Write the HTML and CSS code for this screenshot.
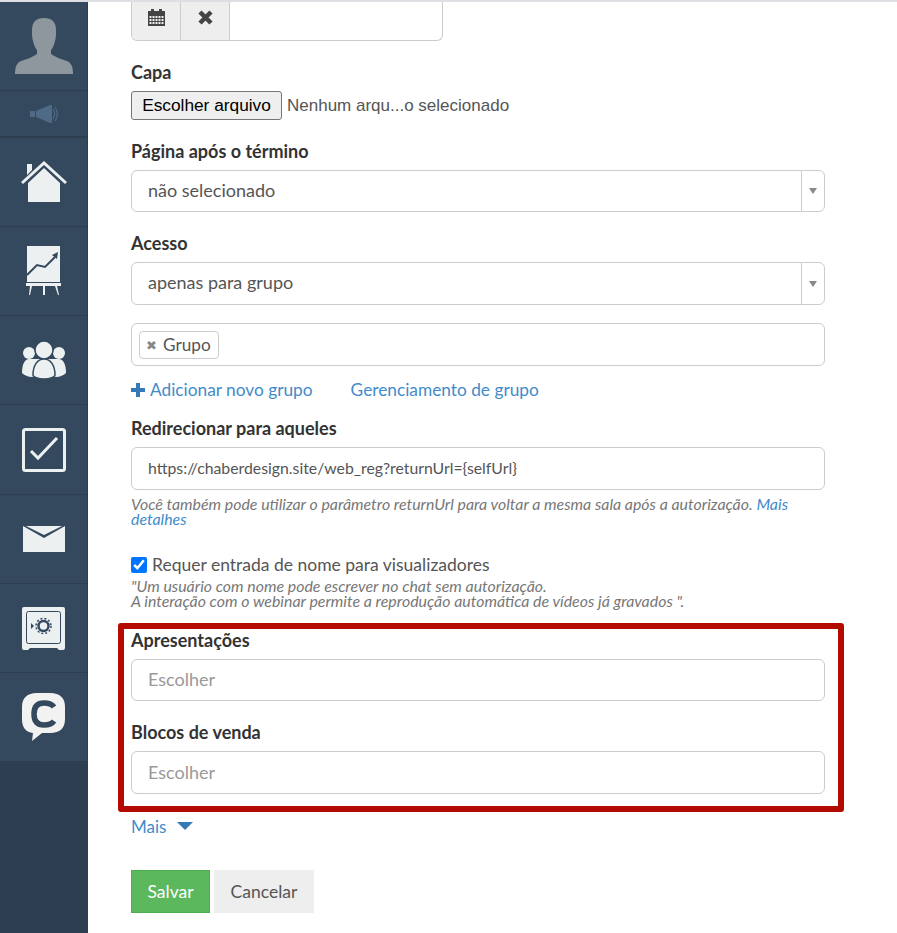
FILE: index.html
```html
<!DOCTYPE html>
<html lang="pt">
<head>
    <meta charset="UTF-8">
    <meta name="viewport" content="width=device-width, initial-scale=1.0">
    <title>Webinar</title>
    <link rel="stylesheet" href="styles.css">
</head>
<body>
    <div class="top-line"></div>
    <div class="layout">
        <nav class="sidebar">
            <div class="nav-list">
                <a class="nav-item">
                    <svg width="58" height="56" viewBox="0 0 58 56"><path fill="#8e969e" d="M29 0c8 0 12 4 12 12 0 4 0 8-1 11-1 4-2 7-4 9v4c4 3 10 5 16 7 4 2 6 5 6 13H0c0-8 2-11 6-13 6-2 12-4 16-7v-4c-2-2-3-5-4-9-1-3-1-7-1-11C17 4 21 0 29 0z"/></svg>
                </a>
                <a class="nav-item nav-sound">
                    <svg width="28" height="18" viewBox="0 0 28 18"><path fill="#4f6a87" d="M0 6h5v6H0zM6 6l14-6h2v18h-2L6 12z"/><path fill="none" stroke="#4f6a87" stroke-width="1.2" d="M23 4c2 3 2 7 0 10M25 2c3 4 3 10 0 14"/></svg>
                </a>
                <a class="nav-item">
                    <svg width="46" height="42" viewBox="0 0 46 42"><path fill="#ecf0f1" d="M6 3h5v6l-5 5zM7 22 23 7l16 15v19H7z"/><path fill="none" stroke="#ecf0f1" stroke-width="3" d="M1 22 23 2l22 20"/></svg>
                </a>
                <a class="nav-item">
                    <svg width="36" height="50" viewBox="0 0 36 50"><path fill="#ecf0f1" d="M1 0h33v36H1zM0 37h35v3H0zM4 40h2l-2 9H3zM17 40h2v9h-2zM29 40h2l2 9h-1z"/><path fill="none" stroke="#34495e" stroke-width="2" d="M1 29l10-10 8 2 10-10"/><path fill="#34495e" d="M26 9l6-3-1 7z"/></svg>
                </a>
                <a class="nav-item">
                    <svg width="44" height="38" viewBox="0 0 44 38"><g fill="#ecf0f1"><circle cx="7" cy="12" r="6"/><circle cx="37" cy="12" r="6"/><path d="M0 32c0-9 3-14 7-14h30c4 0 7 5 7 14-2 2-6 4-10 4H10c-4 0-8-2-10-4z"/><g stroke="#34495e" stroke-width="1.500"><circle cx="22" cy="9" r="9"/><path d="M22 18c7 0 11 7 11 16 0 2-5 4-11 4s-11-2-11-4c0-9 4-16 11-16z"/></g></g></svg>
                </a>
                <a class="nav-item nav-tall">
                    <svg width="44" height="44" viewBox="0 0 44 44"><rect x="1.500" y="1.500" width="41" height="41" rx="2" fill="none" stroke="#ecf0f1" stroke-width="3"/><path fill="none" stroke="#ecf0f1" stroke-width="3" d="M9 23l7 7 19-20"/></svg>
                </a>
                <a class="nav-item">
                    <svg width="42" height="26" viewBox="0 0 42 26"><path fill="#ecf0f1" d="M0 0l21 12L42 0v26H0zM3 0h36L21 9z"/></svg>
                </a>
                <a class="nav-item">
                    <svg width="43" height="43" viewBox="0 0 43 43"><path fill="#ecf0f1" d="M2 0h39q2 0 2 2v39q0 2-2 2h-4l-2-2H8l-2 2H2q-2 0-2-2V2q0-2 2-2z"/><rect x="4.500" y="4.500" width="34" height="32" rx="2" fill="none" stroke="#34495e" stroke-width="1"/><circle cx="21.500" cy="19" r="5" fill="none" stroke="#34495e" stroke-width="2.500"/><circle cx="21.500" cy="19" r="7.500" fill="none" stroke="#34495e" stroke-width="1.500" stroke-dasharray="2 2"/><path fill="#34495e" d="M9 16l3 3-3 3z"/></svg>
                </a>
                <a class="nav-item">
                    <svg width="43" height="48" viewBox="0 0 43 48"><path fill="#f2f2f2" d="M15 0h13c10 0 15 5 15 14v12c0 9-5 14-15 14h-8l-10 8 1-8C4 39 0 35 0 26V14C0 5 5 0 15 0z"/><path fill="none" stroke="#34495e" stroke-width="5.500" d="M32 14c-2-3-6-4-10-4-7 0-10 4-10 11s3 11 10 11c4 0 8-1 10-4"/></svg>
                </a>
            </div>
        </nav>

        <main class="content">
            <div class="date-group">
                <button class="addon"><svg width="17" height="17" viewBox="0 0 17 17"><path fill="#444" d="M0 2h3V0h3v2h5V0h3v2h3v15H0z"/><path fill="#eee" d="M1.500 7h2v2h-2zM4.500 7h2v2h-2zM7.500 7h2v2h-2zM10.500 7h2v2h-2zM13.500 7h2v2h-2zM1.500 10h2v2h-2zM4.500 10h2v2h-2zM7.500 10h2v2h-2zM10.500 10h2v2h-2zM13.500 10h2v2h-2zM1.500 13h2v2h-2zM4.500 13h2v2h-2zM7.500 13h2v2h-2zM10.500 13h2v2h-2zM13.500 13h2v2h-2z"/></svg></button>
                <button class="addon"><svg width="15" height="15" viewBox="0 0 15 15"><path fill="none" stroke="#444" stroke-width="4.500" d="M2 2l11 11M13 2 2 13"/></svg></button>
                <div class="date-input"></div>
            </div>

            <div class="form-group cover-group">
                <label>Capa</label>
                <div class="file-row">
                    <button class="file-button">Escolher arquivo</button>
                    <span class="file-name">Nenhum arqu...o selecionado</span>
                </div>
            </div>

            <div class="form-group">
                <label>Página após o término</label>
                <div class="field select">
                    <span>não selecionado</span>
                    <div class="select-arrow"><i></i></div>
                </div>
            </div>

            <div class="form-group access-group">
                <label>Acesso</label>
                <div class="field field-tall select">
                    <span>apenas para grupo</span>
                    <div class="select-arrow"><i></i></div>
                </div>
            </div>

            <div class="field field-tall tags">
                <div class="tag"><span class="tag-x">✖</span>Grupo</div>
            </div>

            <div class="group-links">
                <a href="#"><span class="plus"></span>Adicionar novo grupo</a>
                <a href="#">Gerenciamento de grupo</a>
            </div>

            <div class="form-group redirect-group">
                <label>Redirecionar para aqueles</label>
                <div class="field field-tall url-field">https://chaberdesign.site/web_reg?returnUrl={selfUrl}</div>
                <p class="help">Você também pode utilizar o parâmetro returnUrl para voltar a mesma sala após a autorização. <a href="#">Mais detalhes</a></p>
            </div>

            <div class="check-row">
                <input type="checkbox" checked>
                <span>Requer entrada de nome para visualizadores</span>
            </div>
            <p class="help check-help">"Um usuário com nome pode escrever no chat sem autorização.<br>A interação com o webinar permite a reprodução automática de vídeos já gravados ".</p>

            <div class="form-group highlight-group">
                <label>Apresentações</label>
                <div class="field placeholder">Escolher</div>
            </div>
            <div class="form-group">
                <label>Blocos de venda</label>
                <div class="field field-tall placeholder">Escolher</div>
            </div>

            <a href="#" class="more">Mais <i class="more-arrow"></i></a>

            <div class="actions">
                <button class="btn btn-save">Salvar</button>
                <button class="btn btn-cancel">Cancelar</button>
            </div>

            <div class="red-frame"></div>
        </main>
    </div>
</body>
</html>
```

FILE: styles.css
```css
* {
    margin: 0;
    padding: 0;
    box-sizing: border-box;
}

html, body {
    height: 933px;
    overflow: hidden;
}

body {
    background: #fff;
    font-family: Lato, "Open Sans", sans-serif;
    font-size: 17.5px;
    color: #333;
}

a {
    color: #428bca;
    text-decoration: none;
}

.top-line {
    height: 2px;
    background: #dddfe3;
}

.layout {
    display: flex;
    height: 931px;
}

/* left menu */
.sidebar {
    width: 88px;
    flex-shrink: 0;
    background: #2c3e50;
    border-right: 1px solid #2c3e50;
}

.nav-list {
    background: #34495e;
}

.nav-item {
    height: 89px;
    display: flex;
    align-items: center;
    justify-content: center;
    border-bottom: 1px solid #2c3e50;
}

.nav-tall {
    height: 90px;
}

.nav-sound {
    height: 47px;
    border-bottom-width: 2px;
}

/* form */
.content {
    position: relative;
    flex: 1;
    padding: 0 72px 0 43px;
}

.date-group {
    display: flex;
    width: 312px;
    height: 39px;
    border: 1px solid #ccc;
    border-top: none;
    border-radius: 0 0 6px 6px;
    overflow: hidden;
}

.addon {
    width: 49px;
    border: none;
    border-right: 1px solid #ccc;
    background: #eee;
    display: flex;
    align-items: center;
    justify-content: center;
    padding-bottom: 8px;
}

.date-input {
    flex: 1;
}

.form-group {
    margin-bottom: 21px;
}

.form-group label {
    display: block;
    font-size: 18px;
    font-weight: 700;
    line-height: 20px;
    margin-bottom: 9px;
    color: #333;
}

.cover-group {
    margin-top: 21px;
}

.file-row {
    display: flex;
    align-items: center;
    gap: 5px;
    font-family: "Liberation Sans", Arial, sans-serif;
    font-size: 17px;
}

.file-button {
    height: 29px;
    width: 151px;
    background: #efefef;
    border: 1px solid #767676;
    border-radius: 3px;
    font-family: "Liberation Sans", Arial, sans-serif;
    font-size: 17.3px;
    color: #000;
}

.file-name {
    color: #555;
}

.field {
    height: 42px;
    border: 1px solid #ccc;
    border-radius: 6px;
    padding: 0 16px 2px;
    display: flex;
    align-items: center;
    font-size: 18px;
    color: #555;
}

.field-tall {
    height: 43px;
}

.url-field {
    font-size: 15.8px;
}

.select {
    justify-content: space-between;
    padding: 0 0 0 16px;
}

.select > span {
    padding-bottom: 3px;
}

.select-arrow {
    width: 23px;
    height: 100%;
    border-left: 1px solid #ccc;
    display: flex;
    align-items: center;
    justify-content: center;
}

.select-arrow i {
    border-left: 4px solid transparent;
    border-right: 4px solid transparent;
    border-top: 6px solid #888;
}

.access-group {
    margin-bottom: 18px;
}

.tags {
    padding: 0 7px;
}

.tag {
    height: 28px;
    padding: 0 7px 0 6px;
    border: 1px solid #ccc;
    border-radius: 4px;
    display: flex;
    align-items: center;
    font-size: 17.2px;
}

.tag-x {
    font-size: 13px;
    color: #888;
    margin-right: 6px;
}

.group-links {
    display: flex;
    gap: 38px;
    margin-top: 14px;
    font-size: 17.3px;
    line-height: 20px;
}

.plus {
    display: inline-block;
    width: 14px;
    height: 14px;
    margin-right: 5px;
    vertical-align: -1px;
    background:
        linear-gradient(#337ab7, #337ab7) center / 14px 4px no-repeat,
        linear-gradient(#337ab7, #337ab7) center / 4px 14px no-repeat;
}

.redirect-group {
    margin-top: 18px;
    margin-bottom: 0;
}

.help {
    font-size: 15.9px;
    font-style: italic;
    line-height: 15px;
    color: #777;
}

.redirect-group .help {
    margin-top: 6px;
}

.check-row {
    display: flex;
    align-items: center;
    gap: 5px;
    margin-top: 29px;
    line-height: 20px;
    color: #555;
}

.check-row input {
    width: 16px;
    height: 16px;
}

.check-help {
    margin-top: 3px;
}

.highlight-group {
    margin-top: 22px;
}

.placeholder {
    color: #999;
}

.more {
    display: inline-block;
    margin-top: 2px;
    font-size: 17px;
    line-height: 20px;
}

.more-arrow {
    display: inline-block;
    margin-left: 6px;
    vertical-align: 3px;
    border-left: 8px solid transparent;
    border-right: 8px solid transparent;
    border-top: 8px solid #337ab7;
}

.actions {
    display: flex;
    gap: 4px;
    margin-top: 33px;
}

.btn {
    height: 43px;
    border: 1px solid transparent;
    font-family: inherit;
    font-size: 17.5px;
}

.btn-save {
    width: 79px;
    background: #5cb85c;
    border-color: #4cae4c;
    color: #fff;
}

.btn-cancel {
    width: 100px;
    background: #eee;
    border-color: #eee;
    color: #555;
}

/* red annotation around the two fields */
.red-frame {
    position: absolute;
    left: 30px;
    top: 621px;
    width: 726px;
    height: 189px;
    border: 6px solid #b30b00;
    border-radius: 3px;
}
```
